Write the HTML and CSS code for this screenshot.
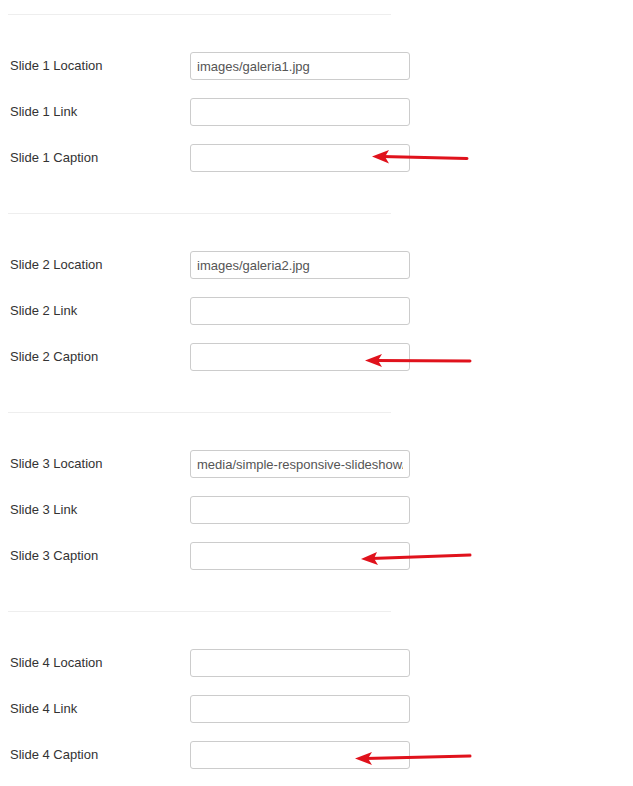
FILE: index.html
```html
<!DOCTYPE html>
<html lang="en">
<head>
  <meta charset="UTF-8" />
  <title>Slideshow Options</title>
  <link rel="stylesheet" href="styles.css">
</head>
<body>
  <div class="options">
    <div class="group">
      <div class="row"><label>Slide 1 Location</label><input class="field" type="text" value="images/galeria1.jpg"></div>
      <div class="row"><label>Slide 1 Link</label><input class="field" type="text"></div>
      <div class="row"><label>Slide 1 Caption</label><input class="field" type="text"></div>
    </div>
    <div class="group">
      <div class="row"><label>Slide 2 Location</label><input class="field" type="text" value="images/galeria2.jpg"></div>
      <div class="row"><label>Slide 2 Link</label><input class="field" type="text"></div>
      <div class="row"><label>Slide 2 Caption</label><input class="field" type="text"></div>
    </div>
    <div class="group">
      <div class="row"><label>Slide 3 Location</label><input class="field" type="text" value="media/simple-responsive-slideshow/images/3.jpg"></div>
      <div class="row"><label>Slide 3 Link</label><input class="field" type="text"></div>
      <div class="row"><label>Slide 3 Caption</label><input class="field" type="text"></div>
    </div>
    <div class="group">
      <div class="row"><label>Slide 4 Location</label><input class="field" type="text"></div>
      <div class="row"><label>Slide 4 Link</label><input class="field" type="text"></div>
      <div class="row"><label>Slide 4 Caption</label><input class="field" type="text"></div>
    </div>
  </div>

  <!-- red arrows drawn over the caption fields -->
  <svg class="arrows" width="633" height="786" viewBox="0 0 633 786">
    <g stroke="#e0121c" stroke-width="3" stroke-linecap="round" fill="#e0121c">
      <line x1="467" y1="158.5" x2="382" y2="156.5"/>
      <line x1="470" y1="361" x2="375" y2="360.5"/>
      <line x1="470" y1="555" x2="371" y2="558.5"/>
      <line x1="470" y1="756" x2="365" y2="758.5"/>
    </g>
    <g fill="#e0121c" stroke="none">
      <polygon points="372,156.5 389,150 385,156.7 389,163.5"/>
      <polygon points="365,360.5 382,354 378,360.6 382,367"/>
      <polygon points="361,559 377,552 374,558.5 378,565"/>
      <polygon points="355,758.5 372,752 368,758.4 372,765"/>
    </g>
  </svg>
</body>
</html>
```

FILE: styles.css
```css
* { box-sizing: border-box; }
html, body {
  margin: 0;
  padding: 0;
  background: #fff;
  font-family: "Liberation Sans", Arial, sans-serif;
  font-size: 13px;
  color: #333;
}
.options {
  padding-top: 14px;
}
.group {
  margin-left: 8px;
  width: 383px;
  border-top: 1px solid #eee;
  padding-top: 37px;
  padding-bottom: 41px;
  display: flex;
  flex-direction: column;
  gap: 18px;
}
.row {
  display: flex;
  align-items: center;
  height: 28px;
  width: max-content;
}
.row label {
  flex: none;
  width: 182px;
  padding-left: 2px;
  margin-top: -1px;
}
.field {
  width: 220px;
  height: 28px;
  flex: none;
  border: 1px solid #ccc;
  border-radius: 3px;
  padding: 0 6px;
  font-family: "Liberation Sans", Arial, sans-serif;
  font-size: 13px;
  color: #555;
  background: #fff;
  outline: none;
}
.arrows {
  position: absolute;
  top: 0;
  left: 0;
  pointer-events: none;
}
```
